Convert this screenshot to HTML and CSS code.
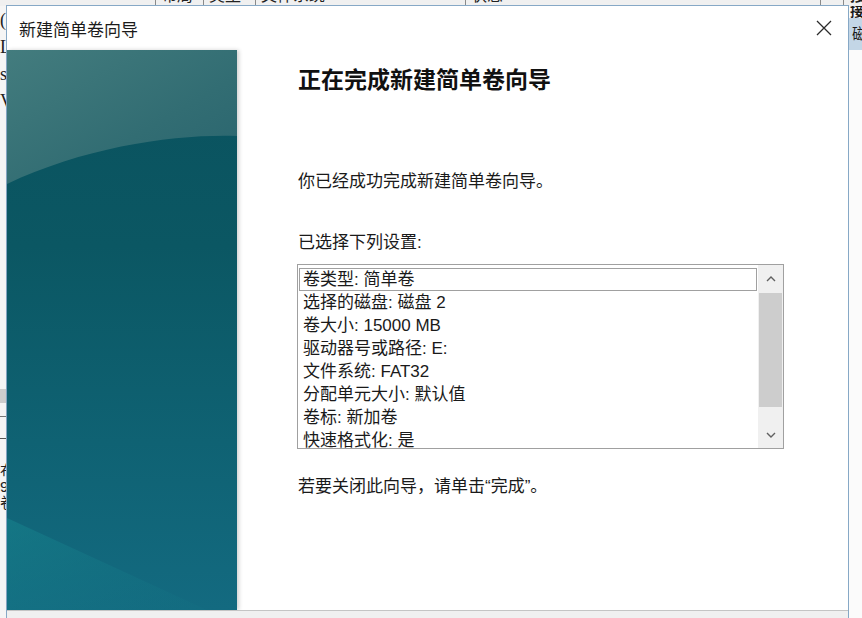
FILE: index.html
```html
<!DOCTYPE html>
<html lang="zh-CN">
<head>
    <meta charset="UTF-8">
    <meta name="viewport" content="width=device-width, initial-scale=1.0">
    <title>新建简单卷向导</title>
    <link rel="stylesheet" href="styles.css">
</head>
<body>

<!-- 后面的磁盘管理窗口，只露出边缘 -->
<div class="desk">
    <div class="desk-head">
        <span class="hcell h0"></span>
        <span class="hcell h1">布局</span>
        <span class="hcell h2">类型</span>
        <span class="hcell h3">文件系统</span>
        <span class="hcell h4">状态</span>
        <span class="hcell h5">˅</span>
        <span class="hcell h6">接</span>
    </div>
    <div class="desk-body">
        <div class="desk-left">
            <div class="frags">
                <div>(C:)</div>
                <div>Local</div>
                <div>simple</div>
                <div>Volume</div>
            </div>
            <div class="band"></div>
            <div class="rule"></div>
            <div class="rule dark"></div>
            <div class="frags cjk">
                <div>布局</div>
                <div>9</div>
                <div>卷</div>
            </div>
        </div>
        <div class="desk-right">
            <div class="right-top">接</div>
            <div class="right-head">磁盘</div>
        </div>
    </div>
</div>

<div class="wizard">
    <div class="titlebar">
        <span class="title">新建简单卷向导</span>
        <svg class="close" width="16" height="16" viewBox="0 0 16 16">
            <path d="M1 1 L15 15 M15 1 L1 15" stroke="#2b2b2b" stroke-width="1.3" fill="none"/>
        </svg>
    </div>

    <div class="main">
        <div class="side">
            <svg width="230" height="560" viewBox="0 0 230 560" preserveAspectRatio="none">
                <defs>
                    <linearGradient id="base" x1="0" y1="0" x2="0" y2="1">
                        <stop offset="0" stop-color="#0a525e"/>
                        <stop offset="0.35" stop-color="#0b5763"/>
                        <stop offset="0.7" stop-color="#0f6273"/>
                        <stop offset="1" stop-color="#136a80"/>
                    </linearGradient>
                    <linearGradient id="top" x1="0" y1="0" x2="1" y2="1">
                        <stop offset="0" stop-color="#437c7e"/>
                        <stop offset="0.6" stop-color="#326d73"/>
                        <stop offset="1" stop-color="#29646e"/>
                    </linearGradient>
                    <linearGradient id="wedge" x1="0" y1="0" x2="1" y2="1">
                        <stop offset="0" stop-color="#17848e" stop-opacity="0.55"/>
                        <stop offset="1" stop-color="#147585" stop-opacity="0.15"/>
                    </linearGradient>
                </defs>
                <rect x="0" y="0" width="230" height="560" fill="url(#base)"/>
                <path d="M0 0 H230 V86 C170 84 80 96 0 134 Z" fill="url(#top)"/>
                <path d="M0 468 L200 560 L0 560 Z" fill="url(#wedge)"/>
            </svg>
        </div>

        <div class="content">
            <h1>正在完成新建简单卷向导</h1>
            <p class="intro">你已经成功完成新建简单卷向导。</p>
            <p class="label">已选择下列设置:</p>

            <div class="listbox">
                <ul class="items">
                    <li class="focus">卷类型: 简单卷</li>
                    <li>选择的磁盘: 磁盘 2</li>
                    <li>卷大小: 15000 MB</li>
                    <li>驱动器号或路径: E:</li>
                    <li>文件系统: FAT32</li>
                    <li>分配单元大小: 默认值</li>
                    <li>卷标: 新加卷</li>
                    <li>快速格式化: 是</li>
                </ul>
                <div class="scrollbar">
                    <div class="arrow">
                        <svg width="10" height="6" viewBox="0 0 10 6"><path d="M1 5 L5 1 L9 5" stroke="#606060" stroke-width="1.4" fill="none"/></svg>
                    </div>
                    <div class="track"><div class="thumb"></div></div>
                    <div class="arrow">
                        <svg width="10" height="6" viewBox="0 0 10 6"><path d="M1 1 L5 5 L9 1" stroke="#606060" stroke-width="1.4" fill="none"/></svg>
                    </div>
                </div>
            </div>

            <p class="outro">若要关闭此向导，请单击“完成”。</p>
        </div>
    </div>

    <div class="footer"></div>
</div>

</body>
</html>
```

FILE: styles.css
```css
body {
    margin: 0;
    width: 862px;
    height: 618px;
    overflow: hidden;
    background-color: #f7f7f7;
    font-family: "Liberation Sans", "Noto Sans CJK SC", sans-serif;
    color: #1a1a1a;
}

/* 背后的窗口 */
.desk {
    height: 618px;
    display: flex;
    flex-direction: column;
}
.desk-head {
    height: 6px;
    overflow: hidden;
    display: flex;
    align-items: flex-end;
    background-color: #f0f0f0;
}
.hcell {
    flex: none;
    height: 20px;
    line-height: 20px;
    font-size: 16px;
    padding-left: 5px;
    box-sizing: border-box;
    border-left: 1px solid #8a8a8a;
    color: #222;
    overflow: hidden;
}
.h0 { width: 155px; border-left: none; }
.h1 { width: 48px; }
.h2 { width: 52px; }
.h3 { width: 210px; }
.h4 { width: 355px; }
.h5 { width: 23px; font-size: 12px; }
.h6 { width: 19px; font-weight: bold; padding-left: 6px; }

.desk-body {
    flex: 1;
    display: flex;
    justify-content: space-between;
}
.desk-left {
    width: 6px;
    overflow: hidden;
    background-color: #f5f5f5;
}
.frags {
    padding-top: 1px;
    font-family: "Liberation Serif", "Noto Sans CJK SC", serif;
    font-size: 18px;
    line-height: 27px;
    color: #222;
    white-space: nowrap;
}
.frags.cjk {
    padding-top: 24px;
    line-height: 16px;
    font-size: 15px;
    font-family: "Liberation Sans", "Noto Sans CJK SC", sans-serif;
}
.band {
    margin-top: 274px;
    height: 14px;
    background-color: #cdcdcd;
}
.rule {
    margin-top: 13px;
    height: 1px;
    background-color: #777;
}
.rule.dark {
    margin-top: 21px;
    background-color: #555;
}
.desk-right {
    width: 13px;
    overflow: hidden;
    background-color: #fbfbfb;
}
.right-top {
    height: 12px;
    line-height: 10px;
    padding-left: 1px;
    font-size: 14px;
    font-weight: bold;
    overflow: hidden;
}
.right-head {
    height: 32px;
    line-height: 32px;
    padding-left: 3px;
    font-size: 15px;
    background-color: #c3d6e6;
    overflow: hidden;
    white-space: nowrap;
}

/* 向导对话框 */
.wizard {
    position: absolute;
    left: 6px;
    top: 5px;
    width: 841px;
    height: 612px;
    border: 1px solid #86a8c6;
    border-bottom: none;
    background-color: #ffffff;
    display: flex;
    flex-direction: column;
}
.titlebar {
    height: 44px;
    flex: none;
    display: flex;
    align-items: center;
    justify-content: space-between;
    padding: 0 16px 0 12px;
}
.title {
    font-size: 17px;
    color: #1b1b1b;
}
.main {
    height: 560px;
    flex: none;
    display: flex;
    background-color: #ffffff;
}
.side {
    width: 230px;
    height: 560px;
    flex: none;
    box-shadow: 2px 0 4px rgba(0, 0, 0, 0.18);
}
.side svg {
    display: block;
}
.content {
    flex: 1;
    padding: 15px 0 0 61px;
}
.content h1 {
    margin: 0;
    font-size: 23px;
    line-height: 30px;
    font-weight: bold;
    color: #111;
}
.content p {
    margin: 0;
    font-size: 17px;
    line-height: 24px;
}
.intro {
    padding-top: 75px;
}
.label {
    padding-top: 37px;
}
.outro {
    padding-top: 26px;
}

.listbox {
    margin: 9px 0 0 -1px;
    width: 485px;
    height: 183px;
    border: 1px solid #a0a0a0;
    display: flex;
    overflow: hidden;
}
.items {
    flex: 1;
    list-style: none;
    margin: 0;
    padding: 3px 1px 0 1px;
    overflow: hidden;
}
.items li {
    height: 23px;
    line-height: 23px;
    padding-left: 4px;
    font-size: 17px;
    white-space: nowrap;
    box-sizing: border-box;
}
.items li.focus {
    border: 1px solid #a0a0a0;
    padding-left: 3px;
    line-height: 21px;
}
.scrollbar {
    width: 25px;
    flex: none;
    display: flex;
    flex-direction: column;
    background-color: #f0f0f0;
}
.arrow {
    height: 27px;
    flex: none;
    display: flex;
    align-items: center;
    justify-content: center;
}
.track {
    flex: 1;
    padding: 1px 1px 0 1px;
}
.thumb {
    height: 114px;
    background-color: #cdcdcd;
}

.footer {
    flex: 1;
    border-top: 1px solid #c4c4c4;
    background-color: #f0f0f0;
}
```
